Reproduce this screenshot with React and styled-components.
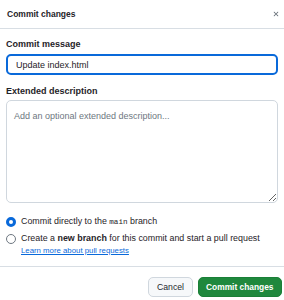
import React from 'react';
import styled, { createGlobalStyle } from 'styled-components';

const Global = createGlobalStyle`
  html, body { margin: 0; padding: 0; background: #ffffff; }
  body { font-family: "Liberation Sans", Arial, sans-serif; color: #1f2328; }
`;

const Dialog = styled.div`
  width: 284px;
  height: 300px;
  display: flex;
  flex-direction: column;
  box-sizing: border-box;
`;

const Header = styled.div`
  height: 29px;
  box-sizing: border-box;
  border-bottom: 1px solid #d8dee4;
  display: flex;
  align-items: center;
  justify-content: space-between;
  padding: 0 3px 1px 7px;
`;

const Title = styled.h1`
  margin: 0;
  font-size: 8.5px;
  font-weight: 700;
`;

const Close = styled.button`
  border: 0;
  background: none;
  padding: 0;
  width: 10px;
  height: 10px;
  display: flex;
  align-items: center;
  justify-content: center;
  color: #656d76;
`;

const Body = styled.div`
  padding: 9px 6px 0 6px;
  display: flex;
  flex-direction: column;
`;

const Label = styled.label`
  font-size: 9px;
  font-weight: 700;
  line-height: 12px;
  margin-bottom: ${p => p.$gap || 4}px;
`;

const Input = styled.input`
  box-sizing: border-box;
  height: 21px;
  border: 2px solid #0969da;
  border-radius: 5px;
  padding: 0 6px 0 8px;
  font-family: inherit;
  font-size: 9px;
  color: #1f2328;
  outline: none;
  margin-bottom: 10px;
`;

const Area = styled.textarea`
  box-sizing: border-box;
  height: 103px;
  border: 1px solid #d0d7de;
  border-radius: 5px;
  padding: 10px 7px;
  font-family: inherit;
  font-size: 9px;
  resize: vertical;
  outline: none;
  &::placeholder { color: #6e7781; }
`;

const Options = styled.div`
  padding: 13px 6px 0 6px;
  display: flex;
  flex-direction: column;
  gap: 5px;
`;

const Option = styled.div`
  display: flex;
  align-items: flex-start;
  gap: 5px;
  font-size: 8.9px;
  line-height: 11px;
`;

const Radio = styled.span`
  flex: none;
  box-sizing: border-box;
  width: 10px;
  height: 10px;
  margin-top: 1px;
  border-radius: 50%;
  background: #fff;
  border: ${p => (p.$on ? '3px solid #0969da' : '1px solid #6e7781')};
`;

const Code = styled.code`
  font-family: "Liberation Mono", monospace;
  font-size: 7.6px;
`;

const Link = styled.a`
  display: block;
  color: #0969da;
  text-decoration: underline;
  font-size: 7.8px;
  line-height: 10px;
  margin-top: 2px;
`;

const Footer = styled.div`
  margin-top: auto;
  border-top: 1px solid #d8dee4;
  display: flex;
  justify-content: flex-end;
  gap: 5px;
  padding: 10px 2px 3px 6px;
`;

const Button = styled.button`
  box-sizing: border-box;
  height: 20px;
  padding: 0 7.5px;
  border-radius: 5px;
  font-family: inherit;
  font-size: ${p => (p.$primary ? 8.4 : 8.7)}px;
  font-weight: ${p => (p.$primary ? 700 : 400)};
  color: ${p => (p.$primary ? '#ffffff' : '#24292f')};
  background: ${p => (p.$primary ? '#1f883d' : '#f6f8fa')};
  border: 1px solid ${p => (p.$primary ? '#1a7f37' : '#d0d7de')};
`;

export default function App() {
  return (
    <>
      <Global />
      <Dialog>
        <Header>
          <Title>Commit changes</Title>
          <Close aria-label="Close">
            <svg width="8" height="8" viewBox="0 0 16 16" fill="currentColor">
              <path d="M3.72 3.72a.75.75 0 0 1 1.06 0L8 6.94l3.22-3.22a.75.75 0 1 1 1.06 1.06L9.06 8l3.22 3.22a.75.75 0 1 1-1.06 1.06L8 9.06l-3.22 3.22a.75.75 0 0 1-1.06-1.06L6.94 8 3.72 4.78a.75.75 0 0 1 0-1.06Z" />
            </svg>
          </Close>
        </Header>
        <Body>
          <Label>Commit message</Label>
          <Input defaultValue="Update index.html" />
          <Label $gap={3}>Extended description</Label>
          <Area placeholder="Add an optional extended description..." />
        </Body>
        <Options>
          <Option>
            <Radio $on />
            <span>Commit directly to the <Code>main</Code> branch</span>
          </Option>
          <Option>
            <Radio />
            <div>
              <span>Create a <b>new branch</b> for this commit and start a pull request</span>
              <Link href="#">Learn more about pull requests</Link>
            </div>
          </Option>
        </Options>
        <Footer>
          <Button>Cancel</Button>
          <Button $primary>Commit changes</Button>
        </Footer>
      </Dialog>
    </>
  );
}
